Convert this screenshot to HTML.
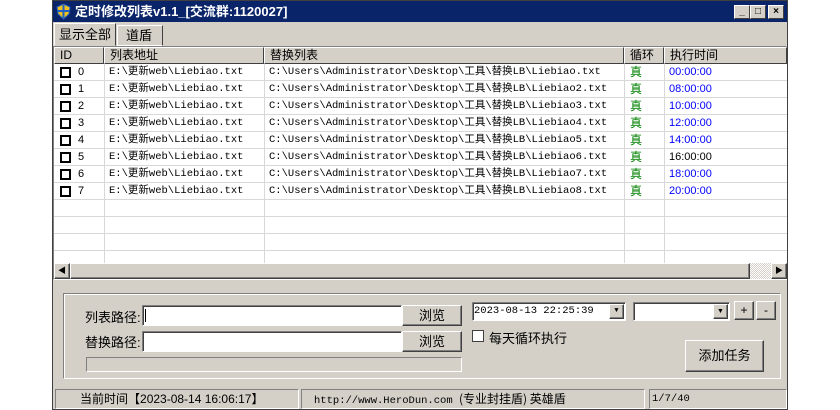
<!DOCTYPE html><html><head><meta charset="utf-8"><style>
*{box-sizing:border-box;margin:0;padding:0}
body{width:840px;height:410px;background:#fff;position:relative;overflow:hidden;font-family:"Liberation Sans","Noto Sans CJK SC","WenQuanYi Zen Hei",sans-serif;font-size:12px}
.a{position:absolute}
.win{left:52px;top:0;width:736px;height:410px;background:#d4d0c8;border:1px solid #404040}
.title{left:0;top:0;width:734px;height:21px;background:#0a246a;color:#fff;font-weight:bold;font-size:13px;line-height:21px;padding-left:22px}
.tb{top:4px;width:16px;height:14px;background:#d4d0c8;border:1px solid;border-color:#fff #404040 #404040 #fff;color:#000;font-size:10px;line-height:12px;text-align:center;font-weight:bold}
.list{left:0;top:45px;width:734px;height:234px;background:#fff;border:1px solid;border-color:#808080 #fff #fff #808080}
.hd{top:0;height:17px;background:#d4d0c8;border:1px solid;border-color:#fff #404040 #404040 #fff;line-height:15px;padding-left:5px;font-size:12px}
.row{left:0;width:733px;height:17px;border-bottom:1px solid #d8d8d8;font-family:"Liberation Mono","Noto Sans CJK SC",monospace;font-size:10.5px;line-height:16px}
.vl{top:17px;width:1px;height:199px;background:#d8d8d8}
.cb{left:6px;top:3px;width:11px;height:11px;border:2px solid #000}
.c{position:absolute;top:0}
.n{font-family:"Liberation Sans",sans-serif;font-size:11px}
.grn{color:#008000;font-family:"Noto Sans CJK SC",sans-serif;font-size:12px}
.blu{color:#0000ff;font-family:"Liberation Sans",sans-serif;font-size:11px}
.inp{background:#fff;border:1px solid;border-color:#808080 #fff #fff #808080;box-shadow:inset 1px 1px 0 #404040}
.btn{background:#d4d0c8;border:1px solid;border-color:#fff #404040 #404040 #fff;box-shadow:inset -1px -1px 0 #808080;text-align:center}
.st{top:388px;height:20px;border:1px solid;border-color:#808080 #fff #fff #808080;line-height:18px}
</style></head><body>
<div class="a win">
<div class="a title">定时修改列表v1.1_[交流群:1120027]</div>
<svg class="a" style="left:3px;top:3px" width="15" height="16" viewBox="0 0 15 16"><path d="M7.5 0 L14 3 L13 10 L7.5 15 L2 10 L1 3 Z" fill="#f0c020" stroke="#2060c0"/><path d="M7.5 1 V14 M1.5 7 H13.5" stroke="#2060c0" stroke-width="2"/></svg>
<div class="a tb" style="left:681px">_</div><div class="a tb" style="left:697px">□</div><div class="a tb" style="left:715px">×</div>
<div class="a" style="left:1px;top:22px;width:62px;height:23px;background:#d4d0c8;border:1px solid;border-color:#fff #404040 transparent #fff;line-height:21px;padding-left:4px;font-size:13px">显示全部</div>
<div class="a" style="left:64px;top:24px;width:46px;height:21px;border:1px solid;border-color:#fff #404040 #fff #fff;line-height:19px;padding-left:8px;font-size:13px">道盾</div>
<div class="a list">
<div class="a hd" style="left:0;width:50px">ID</div>
<div class="a hd" style="left:50px;width:160px">列表地址</div>
<div class="a hd" style="left:210px;width:360px">替换列表</div>
<div class="a hd" style="left:570px;width:40px">循环</div>
<div class="a hd" style="left:610px;width:123px">执行时间</div>
<div class="a vl" style="left:50px"></div><div class="a vl" style="left:210px"></div><div class="a vl" style="left:570px"></div><div class="a vl" style="left:610px"></div>
<div class="a row" style="top:17px"><div class="cb a"></div><span class="c n" style="left:24px">0</span><span class="c" style="left:55px">E:\更新web\Liebiao.txt</span><span class="c" style="left:215px">C:\Users\Administrator\Desktop\工具\替换LB\Liebiao.txt</span><span class="c grn" style="left:576px">真</span><span class="c blu" style="left:615px">00:00:00</span></div>
<div class="a row" style="top:34px"><div class="cb a"></div><span class="c n" style="left:24px">1</span><span class="c" style="left:55px">E:\更新web\Liebiao.txt</span><span class="c" style="left:215px">C:\Users\Administrator\Desktop\工具\替换LB\Liebiao2.txt</span><span class="c grn" style="left:576px">真</span><span class="c blu" style="left:615px">08:00:00</span></div>
<div class="a row" style="top:51px"><div class="cb a"></div><span class="c n" style="left:24px">2</span><span class="c" style="left:55px">E:\更新web\Liebiao.txt</span><span class="c" style="left:215px">C:\Users\Administrator\Desktop\工具\替换LB\Liebiao3.txt</span><span class="c grn" style="left:576px">真</span><span class="c blu" style="left:615px">10:00:00</span></div>
<div class="a row" style="top:68px"><div class="cb a"></div><span class="c n" style="left:24px">3</span><span class="c" style="left:55px">E:\更新web\Liebiao.txt</span><span class="c" style="left:215px">C:\Users\Administrator\Desktop\工具\替换LB\Liebiao4.txt</span><span class="c grn" style="left:576px">真</span><span class="c blu" style="left:615px">12:00:00</span></div>
<div class="a row" style="top:85px"><div class="cb a"></div><span class="c n" style="left:24px">4</span><span class="c" style="left:55px">E:\更新web\Liebiao.txt</span><span class="c" style="left:215px">C:\Users\Administrator\Desktop\工具\替换LB\Liebiao5.txt</span><span class="c grn" style="left:576px">真</span><span class="c blu" style="left:615px">14:00:00</span></div>
<div class="a row" style="top:102px"><div class="cb a"></div><span class="c n" style="left:24px">5</span><span class="c" style="left:55px">E:\更新web\Liebiao.txt</span><span class="c" style="left:215px">C:\Users\Administrator\Desktop\工具\替换LB\Liebiao6.txt</span><span class="c grn" style="left:576px">真</span><span class="c" style="left:615px;font-family:'Liberation Sans';font-size:11px">16:00:00</span></div>
<div class="a row" style="top:119px"><div class="cb a"></div><span class="c n" style="left:24px">6</span><span class="c" style="left:55px">E:\更新web\Liebiao.txt</span><span class="c" style="left:215px">C:\Users\Administrator\Desktop\工具\替换LB\Liebiao7.txt</span><span class="c grn" style="left:576px">真</span><span class="c blu" style="left:615px">18:00:00</span></div>
<div class="a row" style="top:136px"><div class="cb a"></div><span class="c n" style="left:24px">7</span><span class="c" style="left:55px">E:\更新web\Liebiao.txt</span><span class="c" style="left:215px">C:\Users\Administrator\Desktop\工具\替换LB\Liebiao8.txt</span><span class="c grn" style="left:576px">真</span><span class="c blu" style="left:615px">20:00:00</span></div>
<div class="a row" style="top:153px"></div><div class="a row" style="top:170px"></div><div class="a row" style="top:187px"></div>
<div class="a" style="left:0;top:216px;width:733px;height:16px;background:#d4d0c8">
<div class="a btn" style="left:0;top:0;width:16px;height:16px;font-size:8px;line-height:14px">◀</div>
<div class="a btn" style="left:16px;top:0;width:680px;height:16px"></div>
<div class="a" style="left:696px;top:0;width:21px;height:16px;background:repeating-conic-gradient(#fff 0 25%,#d4d0c8 0 50%) 0 0/2px 2px"></div>
<div class="a btn" style="left:717px;top:0;width:16px;height:16px;font-size:8px;line-height:14px">▶</div>
</div>
</div>
<div class="a" style="left:10px;top:292px;width:718px;height:86px;border:1px solid;border-color:#808080 #fff #fff #808080;box-shadow:inset 1px 1px 0 #fff,1px 1px 0 #808080 inset"></div>
<div class="a" style="left:32px;top:306px;font-size:13px">列表路径:</div>
<div class="a" style="left:32px;top:331px;font-size:13px">替换路径:</div>
<div class="a inp" style="left:89px;top:304px;width:260px;height:21px"><div class="a" style="left:2px;top:3px;width:1px;height:13px;background:#000"></div></div>
<div class="a inp" style="left:89px;top:330px;width:260px;height:21px"></div>
<div class="a btn" style="left:349px;top:304px;width:60px;height:21px;line-height:19px;font-size:13px">浏览</div>
<div class="a btn" style="left:349px;top:330px;width:60px;height:21px;line-height:19px;font-size:13px">浏览</div>
<div class="a" style="left:33px;top:356px;width:376px;height:15px;border:1px solid;border-color:#808080 #fff #fff #808080"></div>
<div class="a inp" style="left:419px;top:301px;width:154px;height:19px;font-family:'Liberation Mono',monospace;font-size:10.5px;line-height:16px;padding-left:1px">2023-08-13 22:25:39<div class="a btn" style="right:1px;top:1px;width:15px;height:15px;font-size:7px;line-height:13px">▼</div></div>
<div class="a inp" style="left:580px;top:301px;width:97px;height:19px"><div class="a btn" style="right:1px;top:1px;width:15px;height:15px;font-size:7px;line-height:13px">▼</div></div>
<div class="a btn" style="left:681px;top:300px;width:20px;height:19px;line-height:17px">+</div>
<div class="a btn" style="left:703px;top:300px;width:20px;height:19px;line-height:17px">-</div>
<div class="a" style="left:419px;top:329px;width:12px;height:12px;background:#fff;border:1px solid #404040"></div>
<div class="a" style="left:436px;top:327px;font-size:13px">每天循环执行</div>
<div class="a btn" style="left:632px;top:339px;width:79px;height:32px;line-height:30px;font-size:13px">添加任务</div>
<div class="a st" style="left:2px;width:244px;padding-left:24px">当前时间【<span style="font-family:'Liberation Sans'">2023-08-14 16:06:17</span>】</div>
<div class="a st" style="left:248px;width:344px;padding-left:12px;font-family:'Liberation Mono','Noto Sans CJK SC',monospace;font-size:10.5px">http://www.HeroDun.com <span style="font-family:'Noto Sans CJK SC';font-size:12px">(专业封挂盾) 英雄盾</span></div>
<div class="a st" style="left:596px;width:138px;padding-left:2px;font-family:'Liberation Mono',monospace;font-size:10.5px">1/7/40</div>
</div>
</body></html>
